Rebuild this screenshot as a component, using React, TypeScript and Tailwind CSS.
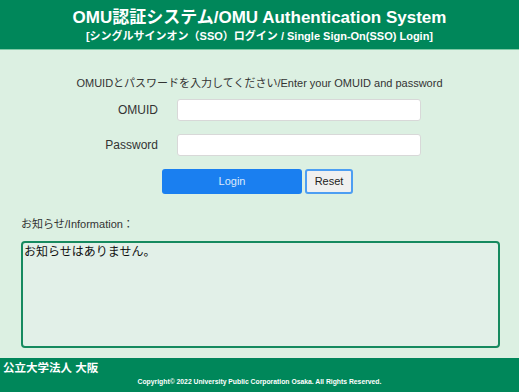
import React from "react";

const F = { fontFamily: '"Liberation Sans", Arial, "Noto Sans CJK JP", sans-serif' };

export default function App() {
  return (
    <div className="flex h-[392px] w-[519px] flex-col overflow-hidden bg-[#dcf0e2] text-[#333]" style={F}>
      <header className="flex h-[50px] shrink-0 flex-col items-center border-b border-[#7fcaa6] bg-[#00875a] pt-[8px] text-white">
        <div className="text-[17px] font-bold leading-[20px]">OMU認証システム/OMU Authentication System</div>
        <div className="mt-[1px] text-[11px] font-bold leading-[14px]">[シングルサインオン（SSO）ログイン / Single Sign-On(SSO) Login]</div>
      </header>
      <main className="flex flex-1 flex-col">
        <div className="mt-[26px] text-center text-[11px] leading-[14px] text-[#333]">
          OMUIDとパスワードを入力してください/Enter your OMUID and password
        </div>
        <div className="mt-[9px] flex items-center">
          <label className="w-[158px] text-right text-[12px] text-[#333]">OMUID</label>
          <input className="ml-[19px] h-[22px] w-[244px] rounded-[3px] border border-[#d8d8d8] bg-white outline-none" />
        </div>
        <div className="mt-[13px] flex items-center">
          <label className="w-[158px] text-right text-[12px] text-[#333]">Password</label>
          <input type="password" className="ml-[19px] h-[22px] w-[244px] rounded-[3px] border border-[#d8d8d8] bg-white outline-none" />
        </div>
        <div className="mt-[13px] flex pl-[162px]">
          <button className="h-[25px] w-[140px] rounded-[3px] bg-[#1a7ff0] text-[11px] text-[#dbe9fb]">Login</button>
          <button className="ml-[3px] h-[25px] w-[48px] rounded-[3px] border-2 border-[#4d9ef2] bg-[#f0f0f0] text-[11px] text-[#222]">Reset</button>
        </div>
        <div className="ml-[21px] mt-[23px] text-[11px] leading-[14px] text-[#333]">お知らせ/Information：</div>
        <div className="ml-[21px] mt-[10px] h-[107px] w-[479px] rounded-[4px] border-2 border-[#168a5f] bg-[#e2f0e8] px-[1px] pt-[1px] text-[12px] leading-[14px] text-[#111]" style={{ fontFamily: '"Noto Sans CJK JP", "DejaVu Sans Mono", monospace' }}>
          お知らせはありません。
        </div>
      </main>
      <footer className="flex h-[34px] shrink-0 flex-col bg-[#00875a] text-white">
        <div className="pl-[3px] pt-[3px] text-[11.5px] font-bold leading-[14px]">公立大学法人 大阪</div>
        <div className="mt-[2px] text-center text-[6.8px] font-bold leading-[9px]">Copyright© 2022 University Public Corporation Osaka. All Rights Reserved.</div>
      </footer>
    </div>
  );
}
